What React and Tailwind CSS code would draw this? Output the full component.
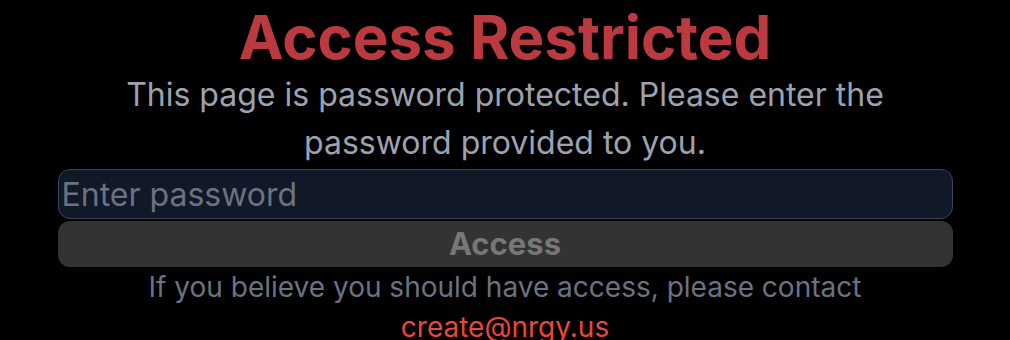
import React from 'react';

const App = () => {
  return (
    <div className="min-h-screen bg-black font-['Inter',sans-serif] overflow-hidden">
      <div className="w-[895px] mx-auto flex flex-col items-center text-center pt-[7px]">
        <h1 className="text-[60px] leading-none font-bold text-[#bb3a40]">Access Restricted</h1>

        <p className="max-w-3xl mt-[4px] text-[32px] leading-[48px] text-[#9ca3af]">
          This page is password protected. Please enter the password provided to you.
        </p>

        <input
          type="password"
          placeholder="Enter password"
          className="w-full h-[50px] mt-[2px] px-[3px] rounded-xl border border-[#3b4559] bg-[#111827] text-[32px] text-gray-200 placeholder:text-[#6b7280] outline-none"
        />

        <button className="w-full h-[46px] mt-[2px] rounded-xl bg-[#333333] text-[31px] font-bold text-[#777777]">
          Access
        </button>

        <p className="max-w-3xl text-[28px] leading-[40px] text-[#6b7280]">
          If you believe you should have access, please contact{' '}
          <a href="#" className="text-[#e8473b]">create@nrgy.us</a>
        </p>
      </div>
    </div>
  );
};

export default App;
